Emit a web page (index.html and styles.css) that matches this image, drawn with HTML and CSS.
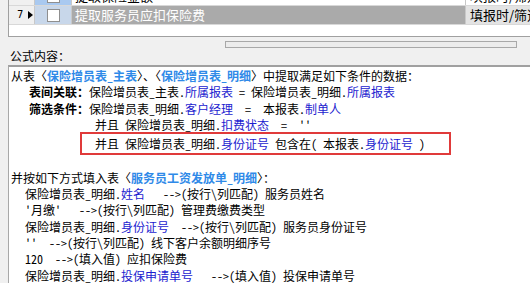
FILE: index.html
```html
<!DOCTYPE html>
<html>
<head>
<meta charset="utf-8">
<link rel="stylesheet" href="styles.css">
</head>
<body>
<div class="grid">
  <div class="rows">
    <div class="row row-a">
      <div class="c-head"></div>
      <div class="c-chk sel"><span class="box"></span></div>
      <div class="c-name">提取保险金额</div>
      <div class="c-last">填报时/筛选</div>
    </div>
    <div class="row row-b">
      <div class="c-head"><span class="num">7</span><span class="arrow"></span></div>
      <div class="c-chk"><span class="box"></span></div>
      <div class="c-name cur">提取服务员应扣保险费</div>
      <div class="c-last gray">填报时/筛选</div>
    </div>
  </div>
</div>
<div class="bar-row"><div class="progress"></div></div>
<div class="label">公式内容：</div>
<div class="editor">
  <div class="ln l0">从表〈<b class="tb">保险增员表_主表</b>〉、〈<b class="tb">保险增员表_明细</b>〉中提取满足如下条件的数据：</div>
  <div class="ln l1"><b>表间关联：</b>保险增员表_主表.<span class="f">所属报表</span> = 保险增员表_明细.<span class="f">所属报表</span></div>
  <div class="ln l1"><b>筛选条件：</b>保险增员表_明细.<span class="f">客户经理</span>  =  本报表.<span class="f">制单人</span></div>
  <div class="ln l2">并且 保险增员表_明细.<span class="f">扣费状态</span>  =  ''</div>
  <div class="hl"><div class="ln l2b">并且 保险增员表_明细.<span class="f">身份证号</span> 包含在( 本报表.<span class="f">身份证号</span> )</div></div>
  <div class="ln"> </div>
  <div class="ln l0">并按如下方式填入表〈<b class="tb">服务员工资发放单_明细</b>〉：</div>
  <div class="ln l3">保险增员表_明细.<span class="f">姓名</span>   -->(按行\列匹配) 服务员姓名</div>
  <div class="ln l3">'月缴'   -->(按行\列匹配) 管理费缴费类型</div>
  <div class="ln l3">保险增员表_明细.<span class="f">身份证号</span>  -->(按行\列匹配) 服务员身份证号</div>
  <div class="ln l3">''  -->(按行\列匹配) 线下客户余额明细序号</div>
  <div class="ln l3">120  -->(填入值) 应扣保险费</div>
  <div class="ln l3">保险增员表_明细.<span class="f">投保申请单号</span>   -->(填入值) 投保申请单号</div>
</div>
</body>
</html>
```
FILE: styles.css
```css
html, body {
  margin: 0;
  padding: 0;
}
body {
  width: 530px;
  height: 283px;
  overflow: hidden;
  background: #f0f0f0;
  font-family: "Noto Sans Mono CJK SC", "Noto Sans CJK SC", "DejaVu Sans Mono", monospace;
  font-size: 12px;
  color: #000;
  display: flex;
  flex-direction: column;
}
.grid {
  margin-left: 8px;
  height: 36px;
  flex: none;
  background: #fff;
  border-left: 1px solid #a0a0a0;
  border-bottom: 1px solid #a0a0a0;
  overflow: hidden;
}
.rows {
  margin-top: -13px;
}
.row {
  display: flex;
  height: 18px;
  border-bottom: 1px solid #d8d8d8;
}
.c-head {
  width: 26px;
  border-right: 1px solid #c8c8c8;
  background: #f0f0f0;
  display: flex;
  align-items: center;
  padding-left: 8px;
  box-sizing: border-box;
  gap: 5px;
}
.num {
  font-family: "DejaVu Sans", sans-serif;
  font-size: 10px;
  line-height: 1;
}
.arrow {
  width: 0;
  height: 0;
  border-top: 4px solid transparent;
  border-bottom: 4px solid transparent;
  border-left: 5px solid #000;
}
.c-chk {
  width: 36px;
  border-right: 1px solid #c8c8c8;
  background: #c8d7ea;
  display: flex;
  align-items: center;
  justify-content: center;
}
.c-chk.sel {
  background: #a9c9f0;
}
.box {
  width: 11px;
  height: 11px;
  background: #fff;
  border: 1px solid #8f8f8f;
}
.c-name {
  width: 394px;
  border-right: 1px solid #c8c8c8;
  line-height: 18px;
  padding-left: 3px;
  box-sizing: border-box;
  font-family: "Noto Sans CJK SC", sans-serif;
  font-size: 13px;
  white-space: nowrap;
  overflow: hidden;
}
.c-name.cur {
  background: #aaaaaa;
  color: #fff;
}
.c-last {
  flex: 1;
  line-height: 18px;
  padding-left: 4px;
  font-family: "Noto Sans CJK SC", sans-serif;
  font-size: 13px;
  white-space: nowrap;
  overflow: hidden;
}
.c-last.gray {
  background: #e3e3e3;
}
.bar-row {
  flex: none;
  display: flex;
  justify-content: flex-end;
  padding: 4px 13px 0 0;
}
.progress {
  width: 290px;
  height: 5px;
  border: 1px solid #a8a8a8;
  background: #ececec;
}
.label {
  flex: none;
  padding-left: 10px;
  height: 17px;
  line-height: 17px;
  margin-top: -1px;
}
.editor {
  flex: 1;
  margin-left: 8px;
  margin-top: 1px;
  background: #fff;
  border-top: 2px solid #a0a0a0;
  border-left: 1px solid #a8a8a8;
  padding: 1px 0 0 2px;
  overflow: hidden;
}
.ln {
  height: 16.33px;
  line-height: 16.33px;
  white-space: pre;
}
.l1 { padding-left: 18px; }
.l2 { padding-left: 84px; }
.l3 { padding-left: 14px; }
.hl {
  margin-left: 69px;
  width: 367px;
  height: 19px;
  border: 2px solid #e03a3a;
  margin-top: -1px;
  margin-bottom: -2px;
}
.l2b {
  padding-left: 13px;
  line-height: 19px;
  height: 19px;
}
b {
  font-weight: bold;
}
.tb {
  color: #2f8ae8;
}
.f {
  color: #1c1ccf;
}
```
